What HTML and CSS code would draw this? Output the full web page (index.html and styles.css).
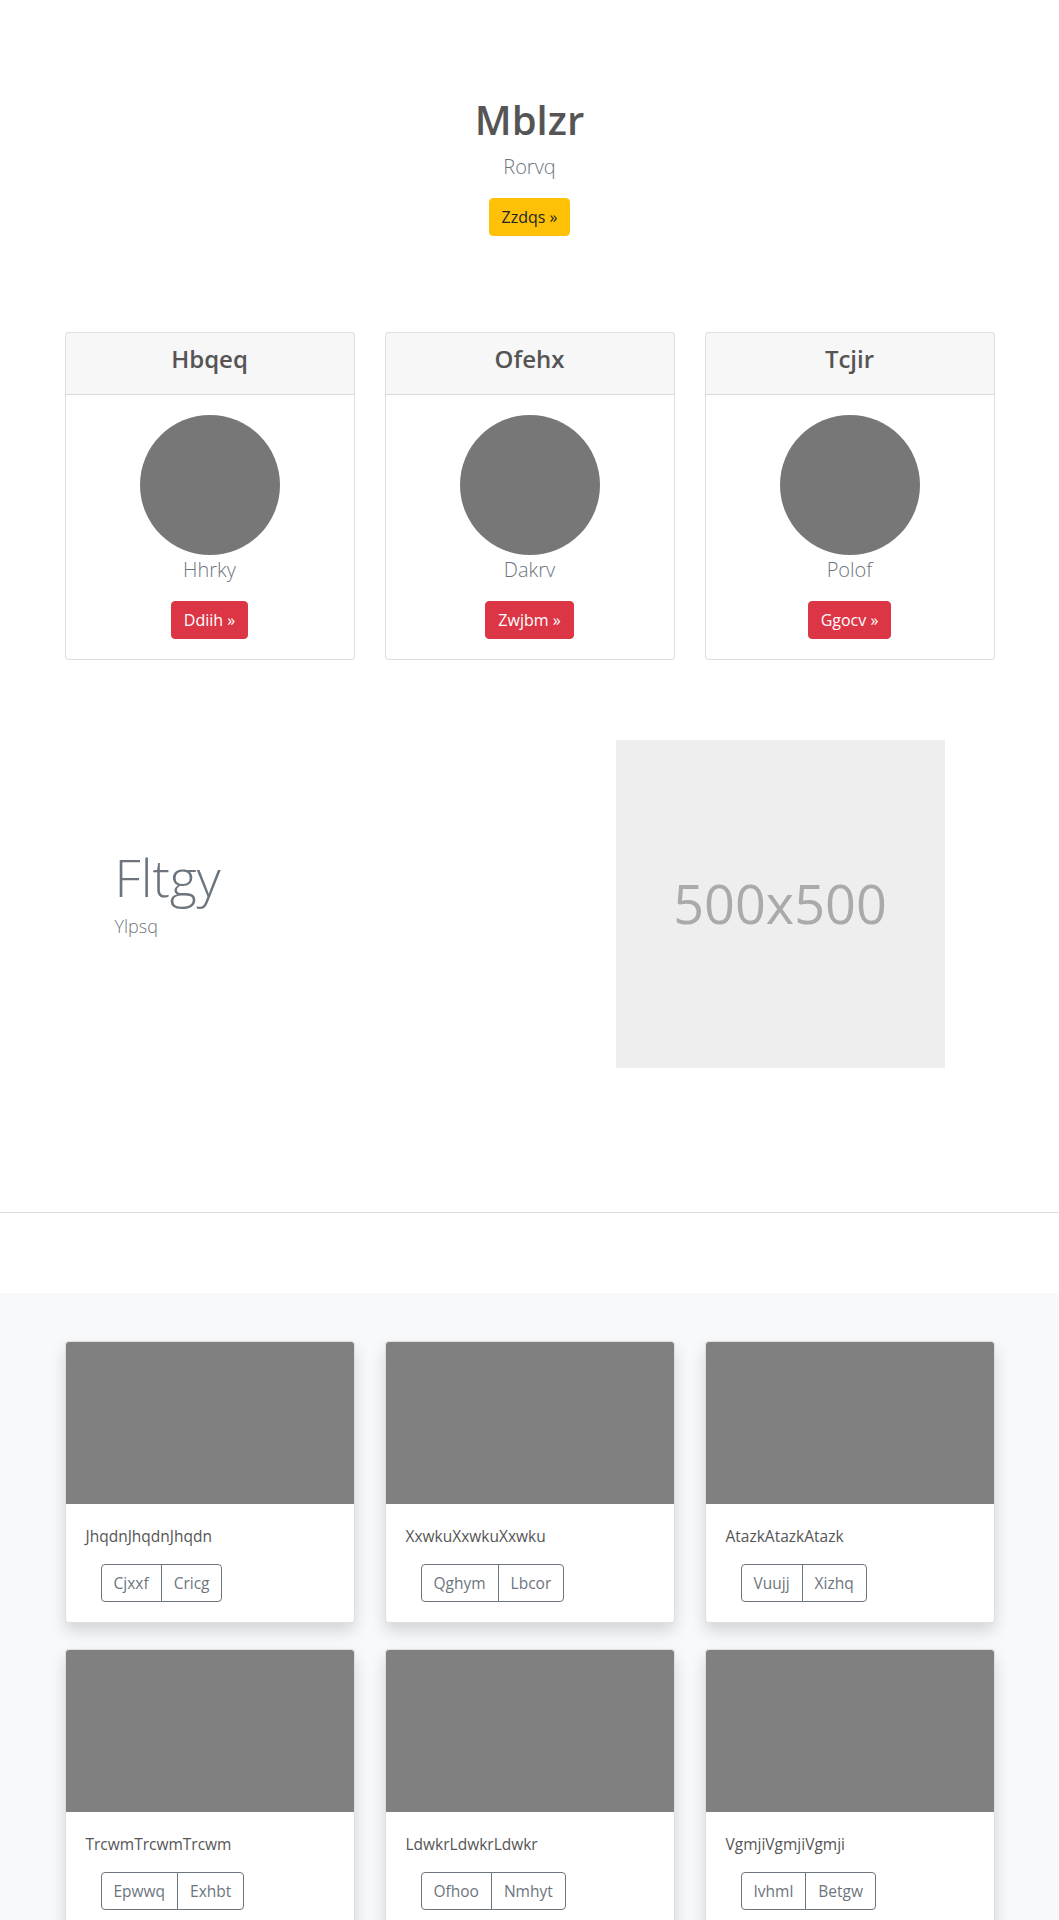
FILE: index.html
```html
<!DOCTYPE html>
<html lang="en">
<head>
<meta charset="utf-8">
<title>Mblzr</title>
<link rel="stylesheet" href="styles.css">
</head>
<body>
<section class="hero">
  <h1 class="hero-title">Mblzr</h1>
  <p class="lead">Rorvq</p>
  <a class="btn btn-warning" href="#">Zzdqs »</a>
</section>

<section class="container pricing">
  <div class="card">
    <div class="card-header"><h4 class="card-title">Hbqeq</h4></div>
    <div class="card-body center">
      <div class="avatar"></div>
      <p class="person">Hhrky</p>
      <a class="btn btn-danger" href="#">Ddiih »</a>
    </div>
  </div>
  <div class="card">
    <div class="card-header"><h4 class="card-title">Ofehx</h4></div>
    <div class="card-body center">
      <div class="avatar"></div>
      <p class="person">Dakrv</p>
      <a class="btn btn-danger" href="#">Zwjbm »</a>
    </div>
  </div>
  <div class="card">
    <div class="card-header"><h4 class="card-title">Tcjir</h4></div>
    <div class="card-body center">
      <div class="avatar"></div>
      <p class="person">Polof</p>
      <a class="btn btn-danger" href="#">Ggocv »</a>
    </div>
  </div>
</section>

<section class="container feature">
  <div class="feature-text">
    <h2 class="display">Fltgy</h2>
    <p class="feature-sub">Ylpsq</p>
  </div>
  <div class="feature-media">
    <div class="placeholder">500x500</div>
  </div>
</section>

<hr class="divider">

<section class="album">
  <div class="container album-grid">
    <div class="acard">
      <div class="thumb"></div>
      <div class="acard-body">
        <p class="acard-text">JhqdnJhqdnJhqdn</p>
        <div class="btn-group"><a class="btn btn-outline" href="#">Cjxxf</a><a class="btn btn-outline" href="#">Cricg</a></div>
      </div>
    </div>
    <div class="acard">
      <div class="thumb"></div>
      <div class="acard-body">
        <p class="acard-text">XxwkuXxwkuXxwku</p>
        <div class="btn-group"><a class="btn btn-outline" href="#">Qghym</a><a class="btn btn-outline" href="#">Lbcor</a></div>
      </div>
    </div>
    <div class="acard">
      <div class="thumb"></div>
      <div class="acard-body">
        <p class="acard-text">AtazkAtazkAtazk</p>
        <div class="btn-group"><a class="btn btn-outline" href="#">Vuujj</a><a class="btn btn-outline" href="#">Xizhq</a></div>
      </div>
    </div>
    <div class="acard">
      <div class="thumb"></div>
      <div class="acard-body">
        <p class="acard-text">TrcwmTrcwmTrcwm</p>
        <div class="btn-group"><a class="btn btn-outline" href="#">Epwwq</a><a class="btn btn-outline" href="#">Exhbt</a></div>
      </div>
    </div>
    <div class="acard">
      <div class="thumb"></div>
      <div class="acard-body">
        <p class="acard-text">LdwkrLdwkrLdwkr</p>
        <div class="btn-group"><a class="btn btn-outline" href="#">Ofhoo</a><a class="btn btn-outline" href="#">Nmhyt</a></div>
      </div>
    </div>
    <div class="acard">
      <div class="thumb"></div>
      <div class="acard-body">
        <p class="acard-text">VgmjiVgmjiVgmji</p>
        <div class="btn-group"><a class="btn btn-outline" href="#">Ivhml</a><a class="btn btn-outline" href="#">Betgw</a></div>
      </div>
    </div>
  </div>
</section>
</body>
</html>
```

FILE: styles.css
```css
* { box-sizing: border-box; }
html, body { margin: 0; padding: 0; }
body {
  font-family: "Open Sans", "Noto Sans", "Liberation Sans", sans-serif;
  font-size: 16px;
  line-height: 1.5;
  color: #212529;
  background: #fff;
}
.container {
  width: 930px;
  margin-left: auto;
  margin-right: auto;
}

/* Buttons */
.btn {
  display: inline-block;
  font-size: 16px;
  line-height: 24px;
  padding: 6px 12px;
  border: 1px solid transparent;
  border-radius: 4px;
  text-decoration: none;
  text-align: center;
  white-space: nowrap;
}
.btn-warning { background: #ffc107; border-color: #ffc107; color: #212529; }
.btn-danger { background: #dc3545; border-color: #dc3545; color: #fff; }
.btn-outline { border-color: #6c757d; color: #6c757d; background: transparent; }

/* Hero */
.hero {
  text-align: center;
  padding-top: 96px;
  padding-bottom: 48px;
}
.hero-title {
  margin: 0 0 8px;
  font-size: 40px;
  line-height: 48px;
  font-weight: 600;
  color: #555;
}
.lead {
  margin: 0 0 16px;
  font-size: 20px;
  line-height: 30px;
  font-weight: 300;
  color: #6c757d;
}

/* Pricing cards */
.pricing {
  margin-top: 48px;
  display: grid;
  grid-template-columns: repeat(3, 1fr);
  column-gap: 30px;
}
.card {
  border: 1px solid rgba(0,0,0,.125);
  border-radius: 4px;
  background: #fff;
  overflow: hidden;
}
.card-header {
  padding: 12px 20px;
  background: rgba(0,0,0,.03);
  border-bottom: 1px solid rgba(0,0,0,.125);
  text-align: center;
}
.card-title {
  margin: 0 0 8px;
  font-size: 24px;
  line-height: 28.8px;
  font-weight: 600;
  color: #555;
}
.card-body { padding: 20px; }
.center { text-align: center; }
.avatar {
  width: 140px;
  height: 140px;
  border-radius: 50%;
  background: #777;
  margin: 0 auto;
}
.person {
  margin: 0 0 16px;
  font-size: 20px;
  line-height: 30px;
  font-weight: 300;
  color: #6c757d;
}

/* Feature */
.feature {
  margin-top: 80px;
  display: grid;
  grid-template-columns: 1fr 1fr;
  column-gap: 30px;
  align-items: center;
}
.feature-text {
  padding-left: 50px;
  margin-bottom: 18px;
}
.display {
  margin: 0;
  font-size: 52px;
  line-height: 52px;
  font-weight: 300;
  color: #6c757d;
}
.feature-sub {
  margin: 11px 0 0;
  font-size: 18px;
  line-height: 24px;
  font-weight: 300;
  color: #6c757d;
}
.feature-media { padding-left: 71px; }
.placeholder {
  width: 329px;
  height: 328px;
  background: #eee;
  color: #aaa;
  font-size: 54px;
  display: flex;
  align-items: center;
  justify-content: center;
}

.divider {
  margin: 144px 0 0;
  border: 0;
  border-top: 1px solid #ddd;
  height: 0;
}

/* Album */
.album {
  margin-top: 80px;
  background: #f8f9fa;
  padding: 48px 0 48px;
}
.album-grid {
  display: grid;
  grid-template-columns: repeat(3, 1fr);
  column-gap: 30px;
  row-gap: 26px;
}
.acard {
  background: #fff;
  border: 1px solid rgba(0,0,0,.125);
  border-radius: 4px;
  overflow: hidden;
  box-shadow: 0 8px 16px rgba(0,0,0,.15);
}
.thumb {
  height: 162px;
  background: #808080;
}
.acard-body { padding: 20px; }
.acard-text {
  margin: 0 0 16px;
  font-size: 15.5px;
  line-height: 24px;
  color: #555;
}
.btn-group {
  display: inline-flex;
  margin-left: 15px;
}
.btn-group .btn { border-radius: 0; font-size: 15.5px; }
.btn-group .btn:first-child { border-radius: 4px 0 0 4px; }
.btn-group .btn:last-child { border-radius: 0 4px 4px 0; margin-left: -1px; }
```
